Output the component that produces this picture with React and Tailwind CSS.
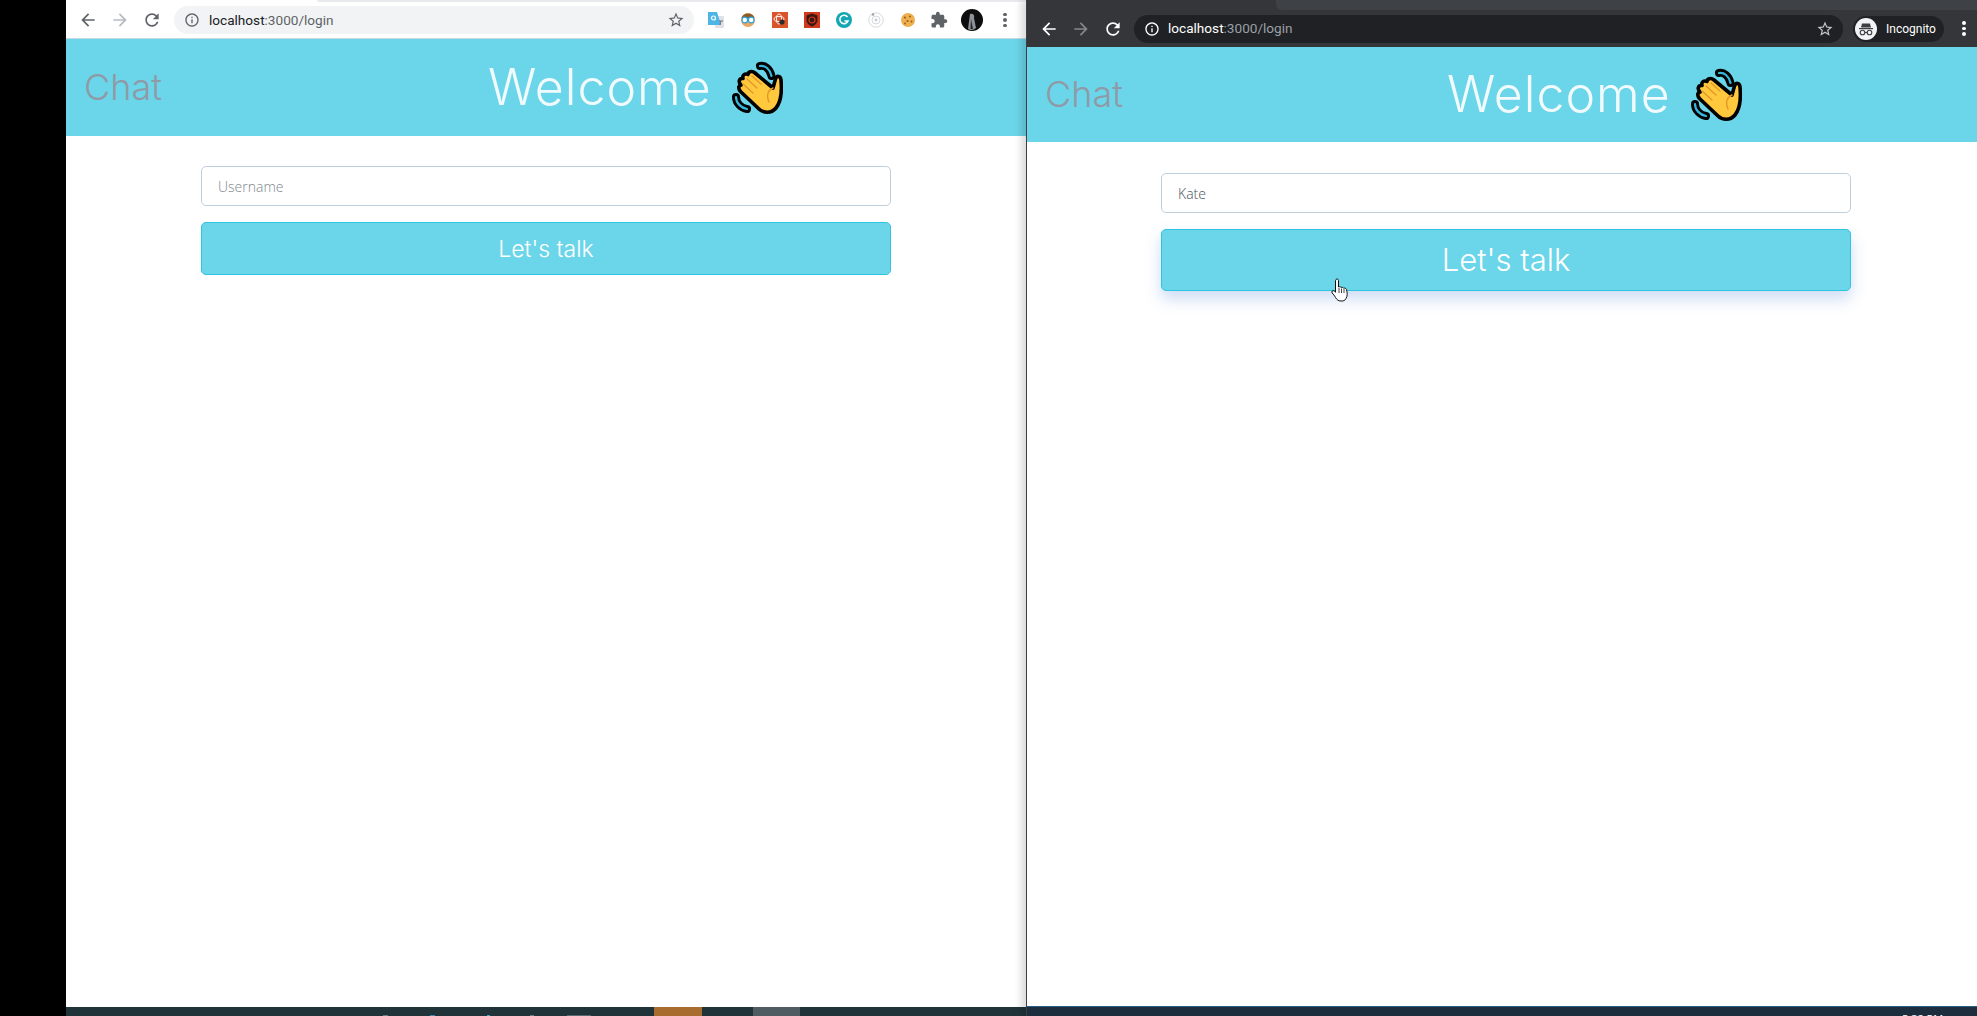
const ARROW = "M20 11H7.83l5.59-5.59L12 4l-8 8 8 8 1.41-1.41L7.83 13H20v-2z";
const RELOAD =
  "M17.65 6.35C16.2 4.9 14.21 4 12 4c-4.42 0-7.99 3.58-7.99 8s3.57 8 7.99 8c3.73 0 6.84-2.55 7.73-6h-2.08c-.82 2.33-3.04 4-5.65 4-3.31 0-6-2.69-6-6s2.69-6 6-6c1.66 0 3.14.69 4.22 1.78L13 11h7V4l-2.35 2.35z";
const INFO =
  "M11 7h2v2h-2zm0 4h2v6h-2zm1-9C6.48 2 2 6.48 2 12s4.48 10 10 10 10-4.48 10-10S17.52 2 12 2zm0 18c-4.41 0-8-3.59-8-8s3.59-8 8-8 8 3.59 8 8-3.59 8-8 8z";
const STAR =
  "M22 9.24l-7.19-.62L12 2 9.19 8.63 2 9.24l5.46 4.73L5.82 21 12 17.27 18.18 21l-1.63-7.03L22 9.24zM12 15.4l-3.76 2.27 1-4.28-3.32-2.88 4.38-.38L12 6.1l1.71 4.04 4.38.38-3.32 2.88 1 4.28L12 15.4z";
const PUZZLE =
  "M20.5 11H19V7c0-1.1-.9-2-2-2h-4V3.5C13 2.12 11.88 1 10.5 1S8 2.12 8 3.5V5H4c-1.1 0-1.99.9-1.99 2v3.8H3.5c1.49 0 2.7 1.21 2.7 2.7s-1.21 2.7-2.7 2.7H2V20c0 1.1.9 2 2 2h3.8v-1.5c0-1.49 1.21-2.7 2.7-2.7 1.49 0 2.7 1.21 2.7 2.7V22H17c1.1 0 2-.9 2-2v-4h1.5c1.38 0 2.5-1.12 2.5-2.5S21.88 11 20.5 11z";

function Icon({ d, className, flip }) {
  return (
    <svg viewBox="0 0 24 24" className={className} fill="currentColor">
      <path d={d} transform={flip ? "matrix(-1 0 0 1 24 0)" : undefined} />
    </svg>
  );
}

function Dots({ className }) {
  return (
    <div className={`flex flex-col gap-[2px] ${className}`}>
      <span className="w-[3.5px] h-[3.5px] rounded-full bg-current" />
      <span className="w-[3.5px] h-[3.5px] rounded-full bg-current" />
      <span className="w-[3.5px] h-[3.5px] rounded-full bg-current" />
    </div>
  );
}

function WaveHand() {
  const hand =
    "M41 27 L43.5 18 C45 14 48.5 15 49 19 C50 30 49 41 44 47 C39 53 31 52 27 48 L9 31 C6 28 6 25 9 24 C6 21 7 17 11 17.5 C10 14 13 12 16 13.5 C16 10.5 20 9.5 23 12 Z";
  return (
    <svg viewBox="0 0 51 54" className="w-[51px] h-[54px] shrink-0">
      <g fill="none" strokeLinecap="round">
        <path d="M28 5 C33 4 38 8 39.5 15" stroke="#000" strokeWidth="8" />
        <path d="M4 36 C4 42 9 47 15 48" stroke="#000" strokeWidth="8" />
        <path d="M28 5 C33 4 38 8 39.5 15" stroke="#35b8dc" strokeWidth="2.2" />
        <path d="M4 36 C4 42 9 47 15 48" stroke="#35b8dc" strokeWidth="2.2" />
      </g>
      <path d={hand} fill="#ffc83d" stroke="#000" strokeWidth="3.6" strokeLinejoin="round" />
      <g fill="none" stroke="#e0992a" strokeWidth="1.4" strokeLinecap="round">
        <path d="M11 23 L21 32" />
        <path d="M15 18 L25 27" />
        <path d="M20 15 L29 23" />
        <path d="M41 27 C36 29 34 34 37 41" />
      </g>
    </svg>
  );
}

function HandCursor() {
  return (
    <svg viewBox="0 0 18 24" className="absolute left-[170px] top-[49px] w-[18px] h-[24px]">
      <path
        d="M5 1.5 C6 .5 7.5 1 7.5 2.5 V9 C8.5 8.5 9.5 8.5 10 9.5 C11 9 12 9.2 12.5 10.2 C13.5 9.8 15 10.2 15.5 11.5 C16.5 15 16.5 18 15 20.5 C14 22.5 12.5 23.2 10 23 C7.5 23 6 22 4.5 19.5 C3.5 17.5 2.5 16.5 1.2 15 C.2 13.5 1.5 12 3.3 13 L4.5 14.2 V2.5 Z"
        fill="#fff"
        stroke="#111"
        strokeWidth="1"
      />
      <path d="M8 10 V15 M10.5 10.5 V15 M13 11 V15" stroke="#111" strokeWidth="0.8" />
    </svg>
  );
}

function TranslateExt() {
  return (
    <svg viewBox="0 0 16 16" className="w-4 h-4">
      <rect x="7" y="4" width="9" height="12" fill="#dfe1e5" />
      <path d="M0 0 H9 L13 13 H0 Z" fill="#4db6e6" />
      <circle cx="5.5" cy="6" r="2" fill="none" stroke="#fff" strokeWidth="1.2" />
      <path d="M11 9 H15 M13 9 L12 13" stroke="#6b7278" strokeWidth="1" />
    </svg>
  );
}

function GlassesExt() {
  return (
    <svg viewBox="0 0 16 16" className="w-4 h-4">
      <circle cx="8" cy="8" r="7" fill="#e8a86a" />
      <path d="M1.5 6 C3 0 13 0 14.5 6 Z" fill="#8a5a2b" />
      <circle cx="4.8" cy="8" r="2.8" fill="#fff" stroke="#2ea3d5" strokeWidth="1.2" />
      <circle cx="11.2" cy="8" r="2.8" fill="#fff" stroke="#2ea3d5" strokeWidth="1.2" />
    </svg>
  );
}

function BugExt() {
  return (
    <svg viewBox="0 0 16 16" className="w-4 h-4">
      <rect width="16" height="16" fill="#d9532b" />
      <ellipse cx="7" cy="7" rx="5" ry="2.5" fill="none" stroke="#fff" strokeWidth="0.9" />
      <ellipse cx="7" cy="7" rx="2.5" ry="5" fill="none" stroke="#fff" strokeWidth="0.9" />
      <circle cx="10" cy="10" r="2.6" fill="#2b2b2b" />
    </svg>
  );
}

function ShieldExt() {
  return (
    <svg viewBox="0 0 16 16" className="w-4 h-4">
      <rect width="16" height="16" fill="#d2381c" />
      <path d="M8 1.5 L13.5 3.5 V8 C13.5 11 11 13.5 8 14.5 C5 13.5 2.5 11 2.5 8 V3.5 Z" fill="#3a1712" />
      <circle cx="8" cy="8" r="3" fill="none" stroke="#d2381c" strokeWidth="1.2" />
    </svg>
  );
}

function GrammarlyExt() {
  return (
    <svg viewBox="0 0 16 16" className="w-4 h-4">
      <circle cx="8" cy="8" r="8" fill="#15a6b5" />
      <path d="M11.5 5 A4.2 4.2 0 1 0 12 9 H8.5" fill="none" stroke="#fff" strokeWidth="1.6" />
    </svg>
  );
}

function RingExt() {
  return (
    <svg viewBox="0 0 16 16" className="w-4 h-4" fill="none">
      <circle cx="8" cy="8" r="7.2" stroke="#d5d8dc" strokeWidth="1" />
      <circle cx="8" cy="8" r="4" stroke="#d5d8dc" strokeWidth="1" />
      <circle cx="8" cy="8" r="1.4" fill="#c9ccd0" />
      <circle cx="5" cy="2.5" r="1.3" fill="#9aa0a6" />
    </svg>
  );
}

function CookieExt() {
  return (
    <svg viewBox="0 0 16 16" className="w-4 h-4">
      <circle cx="8" cy="8" r="7" fill="#eeb04f" />
      <circle cx="5" cy="5.5" r="1.1" fill="#9b5a22" />
      <circle cx="10" cy="4.5" r="1" fill="#9b5a22" />
      <circle cx="7.5" cy="9" r="1.1" fill="#9b5a22" />
      <circle cx="11.5" cy="9.5" r="1" fill="#9b5a22" />
      <circle cx="5" cy="11.5" r="0.9" fill="#9b5a22" />
    </svg>
  );
}

function Avatar() {
  return (
    <svg viewBox="0 0 22 22" className="w-[22px] h-[22px]">
      <circle cx="11" cy="11" r="11" fill="#0e0e0e" />
      <path d="M9 5 C12 4 14 6 13 9 L15 19 C12 21.5 9 21.5 7 20 Z" fill="#8d9298" />
      <path d="M10 10 L12 20 L9.5 20 Z" fill="#24272a" />
    </svg>
  );
}

function IncognitoIcon() {
  return (
    <svg viewBox="0 0 22 22" className="w-[22px] h-[22px]">
      <circle cx="11" cy="11" r="11" fill="#f1f3f4" />
      <path d="M7 5.5 H15 L16 9.5 H6 Z" fill="#3c4043" />
      <rect x="4" y="10" width="14" height="1.2" fill="#3c4043" />
      <circle cx="7.5" cy="14.5" r="2.3" fill="none" stroke="#3c4043" strokeWidth="1.1" />
      <circle cx="14.5" cy="14.5" r="2.3" fill="none" stroke="#3c4043" strokeWidth="1.1" />
      <path d="M9.8 14.5 H12.2" stroke="#3c4043" strokeWidth="1.1" />
    </svg>
  );
}

function LeftWindow() {
  return (
    <div className="w-[960px] flex flex-col bg-white">
      {/* toolbar */}
      <div className="h-[38px] flex flex-col bg-white">
        <div className="h-[2px] ml-[251px] bg-[#e8eaed] rounded-bl-md" />
        <div className="flex-1 flex items-center pl-[12px] text-[#5f6368]">
          <div className="flex items-center gap-[12px]">
            <Icon d={ARROW} className="w-5 h-5" />
            <Icon d={ARROW} flip className="w-5 h-5 text-[#b6bac1]" />
            <Icon d={RELOAD} className="w-5 h-5" />
          </div>
          <div className="ml-[12px] w-[520px] h-[28px] rounded-full bg-[#f1f3f4] flex items-center pl-[10px] pr-[9px]">
            <Icon d={INFO} className="w-4 h-4" />
            <span className="ml-[9px] flex-1 font-['Roboto',sans-serif] text-[13.6px] text-[#5f6368]">
              <span className="text-[#202124]">localhost</span>:3000/login
            </span>
            <Icon d={STAR} className="w-[18px] h-[18px]" />
          </div>
          <div className="ml-[14px] w-[16px] flex justify-center"><TranslateExt /></div>
          <div className="ml-[16px] w-[16px] flex justify-center"><GlassesExt /></div>
          <div className="ml-[16px] w-[16px] flex justify-center"><BugExt /></div>
          <div className="ml-[16px] w-[16px] flex justify-center"><ShieldExt /></div>
          <div className="ml-[16px] w-[16px] flex justify-center"><GrammarlyExt /></div>
          <div className="ml-[16px] w-[16px] flex justify-center"><RingExt /></div>
          <div className="ml-[16px] w-[16px] flex justify-center"><CookieExt /></div>
          <Icon d={PUZZLE} className="ml-[14px] w-[18px] h-[18px]" />
          <div className="ml-[13px]"><Avatar /></div>
          <Dots className="ml-[20px]" />
        </div>
      </div>

      {/* page header */}
      <div className="h-[98px] border-t border-[#c5d9e0] bg-[#6bd5e9] flex items-center">
        <span className="w-[422px] pl-[18px] pb-[2px] font-['Inter',sans-serif] font-light text-[36px] text-[#8f9aa6]">
          Chat
        </span>
        <span className="font-['Inter',sans-serif] font-light text-[50px] tracking-[1px] text-[#f1fbfe]">Welcome</span>
        <div className="ml-[20px]"><WaveHand /></div>
      </div>

      {/* login form */}
      <div className="flex-1 pt-[30px] pl-[135px]">
        <input
          placeholder="Username"
          className="block w-[690px] h-[40px] px-[16px] rounded-[5px] border border-[#bfcedb] bg-white font-['Open_Sans',sans-serif] font-light text-[14px] placeholder:text-[#7d878e] outline-none"
        />
        <button className="mt-[16px] block w-[690px] h-[53px] pt-[1px] rounded-[5px] border border-[#2fc4df] bg-[#6bd5e9] font-['Inter',sans-serif] font-light text-[23px] text-white">
          Let's talk
        </button>
      </div>

      {/* taskbar */}
      <div className="h-[9px] bg-[#1f3339] flex">
        <div className="ml-[317px] mt-[8px] w-[5px] h-[1px] bg-[#6f7b80]" />
        <div className="ml-[42px] mt-[8px] w-[5px] h-[1px] bg-[#3f86a8]" />
        <div className="ml-[52px] mt-[8px] w-[3px] h-[1px] bg-[#3fa8c8]" />
        <div className="ml-[40px] mt-[8px] w-[4px] h-[1px] bg-[#6f7b80]" />
        <div className="ml-[33px] mt-[8px] w-[24px] h-[1px] bg-[#5a676c]" />
        <div className="ml-[63px] w-[48px] bg-[#a86c2e]" />
        <div className="ml-[51px] w-[47px] bg-[#4f5d63]" />
      </div>
    </div>
  );
}

function RightWindow() {
  return (
    <div className="relative flex-1 flex flex-col bg-white border-l border-[#3c4043] shadow-[-5px_0_7px_rgba(0,0,0,0.14)]">
      {/* tab strip + toolbar */}
      <div className="h-[47px] flex flex-col bg-[#35363a]">
        <div className="h-[10px] ml-[249px] bg-[#3e4145] rounded-bl-md" />
        <div className="flex-1 flex items-center pl-[12px] text-white">
          <div className="flex items-center gap-[12px]">
            <Icon d={ARROW} className="w-5 h-5" />
            <Icon d={ARROW} flip className="w-5 h-5 text-[#86888b]" />
            <Icon d={RELOAD} className="w-5 h-5" />
          </div>
          <div className="ml-[11px] w-[709px] h-[28px] rounded-full bg-[#202124] flex items-center pl-[10px] pr-[9px]">
            <Icon d={INFO} className="w-4 h-4" />
            <span className="ml-[8px] flex-1 font-['Roboto',sans-serif] text-[13.6px] text-[#9aa0a6]">
              <span className="text-white">localhost</span>:3000/login
            </span>
            <Icon d={STAR} className="w-[18px] h-[18px] text-[#c4c7cc]" />
          </div>
          <div className="ml-[10px] w-[91px] h-[26px] rounded-full bg-[#202124] flex items-center pl-[2px] gap-[9px]">
            <IncognitoIcon />
            <span className="font-['Roboto',sans-serif] text-[12px] text-white">Incognito</span>
          </div>
          <Dots className="ml-[18px]" />
        </div>
      </div>

      {/* page header */}
      <div className="h-[95px] bg-[#6bd5e9] flex items-center">
        <span className="w-[420px] pl-[18px] pb-[2px] font-['Inter',sans-serif] font-light text-[36px] text-[#8f9aa6]">
          Chat
        </span>
        <span className="font-['Inter',sans-serif] font-light text-[50px] tracking-[1px] text-[#f1fbfe]">Welcome</span>
        <div className="ml-[20px]"><WaveHand /></div>
      </div>

      {/* login form */}
      <div className="flex-1 pt-[31px] pl-[134px]">
        <input
          readOnly
          value="Kate"
          className="block w-[690px] h-[40px] px-[16px] rounded-[5px] border border-[#bfcedb] bg-white font-['Open_Sans',sans-serif] font-light text-[14px] text-[#4b5257] outline-none"
        />
        <div className="relative mt-[16px] w-[690px]">
          <button className="block w-full h-[62px] rounded-[5px] border border-[#2fc4df] bg-[#6bd5e9] shadow-[0_8px_16px_rgba(90,140,220,0.3)] font-['Inter',sans-serif] font-light text-[31px] text-white">
            Let's talk
          </button>
          <HandCursor />
        </div>
      </div>

      {/* taskbar */}
      <div className="h-[10px] border-t border-[#2a5f86] bg-[#1c2e3e] overflow-hidden pl-[875px]">
        <span className="block font-['Open_Sans',sans-serif] text-[11px] leading-[14px] mt-[5px] text-white">5:32 PM</span>
      </div>
    </div>
  );
}

export default function App() {
  return (
    <div className="w-[1977px] h-[1016px] flex overflow-hidden bg-black">
      <div className="w-[66px] bg-black" />
      <LeftWindow />
      <RightWindow />
    </div>
  );
}
